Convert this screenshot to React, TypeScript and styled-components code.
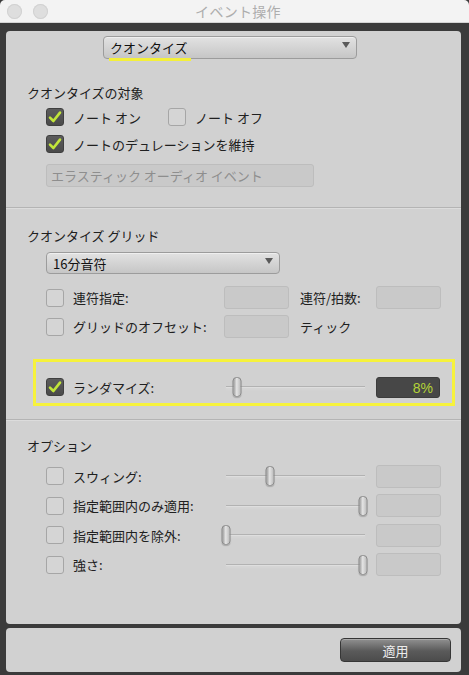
import React from 'react';
import styled, { createGlobalStyle } from 'styled-components';

const GlobalStyle = createGlobalStyle`
  html, body {
    margin: 0;
    padding: 0;
    background: #3b3b3b;
  }
  body {
    font-family: "Noto Sans CJK JP", "Noto Sans", sans-serif;
    font-size: 13px;
    color: #1f1f1f;
  }
`;

// window chrome
const Window = styled.div`
  width: 469px;
  height: 675px;
  display: flex;
  flex-direction: column;
  background: #3b3b3b;
  overflow: hidden;
`;

const TitleBar = styled.div`
  flex: none;
  height: 23px;
  box-sizing: border-box;
  display: grid;
  grid-template-columns: 1fr auto 1fr;
  align-items: center;
  background: #f3f3f3;
  border-bottom: 1px solid #d4d4d4;
  border-radius: 5px 5px 0 0;
  padding-left: 7px;
`;

const Lights = styled.div`
  display: flex;
  gap: 11px;
`;

const Light = styled.span`
  width: 15px;
  height: 15px;
  border-radius: 50%;
  background: #dedede;
  box-shadow: inset 0 0 0 1px #d2d2d2;
`;

const Title = styled.div`
  font-size: 14px;
  color: #adadad;
  letter-spacing: 0.3px;
  line-height: 22px;
`;

const Body = styled.div`
  flex: 1;
  display: flex;
  flex-direction: column;
  gap: 4px;
  padding: 8px 8px 3px 6px;
`;

const Panel = styled.div`
  flex: 1;
  display: flex;
  flex-direction: column;
  background: #d1d1d1;
  border-radius: 4px;
`;

const Footer = styled.div`
  flex: none;
  height: 44px;
  box-sizing: border-box;
  display: flex;
  justify-content: flex-end;
  padding: 10px 10px 0 0;
  background: #d1d1d1;
  border-radius: 4px;
`;

const Section = styled.div<{ $height?: number; $top: number }>`
  flex: ${(p) => (p.$height ? 'none' : '1')};
  height: ${(p) => (p.$height ? `${p.$height}px` : 'auto')};
  box-sizing: border-box;
  display: flex;
  flex-direction: column;
  align-items: flex-start;
  padding: ${(p) => p.$top}px 0 0 21px;
`;

const Divider = styled.div`
  flex: none;
  height: 1px;
  background: #b4b4b4;
  border-bottom: 1px solid #dcdcdc;
`;

const Heading = styled.div<{ $mt?: number }>`
  line-height: 18px;
  margin-top: ${(p) => p.$mt ?? 0}px;
  color: #202020;
`;

// popup menus
const Select = styled.div<{ $width: number; $height: number; $ml: number; $mt?: number }>`
  position: relative;
  box-sizing: border-box;
  width: ${(p) => p.$width}px;
  height: ${(p) => p.$height}px;
  margin-left: ${(p) => p.$ml}px;
  margin-top: ${(p) => p.$mt ?? 0}px;
  padding-left: 6px;
  display: flex;
  align-items: center;
  background: linear-gradient(#e2e2e2, #c6c6c6);
  border: 1px solid #9c9c9c;
  border-radius: 4px;
  box-shadow: inset 0 1px 0 #efefef;
  color: #111;
  font-size: 13px;

  &::after {
    content: '';
    position: absolute;
    right: 6px;
    top: 5px;
    border-left: 4.5px solid transparent;
    border-right: 4.5px solid transparent;
    border-top: 6px solid #5a5a5a;
  }
`;

const Marker = styled.span`
  position: absolute;
  left: 5px;
  bottom: -3px;
  width: 82px;
  height: 3px;
  background: #f4f03a;
`;

// rows
const Row = styled.div<{ $mt?: number; $height?: number }>`
  display: flex;
  align-items: center;
  height: ${(p) => p.$height ?? 24}px;
  margin-top: ${(p) => p.$mt ?? 0}px;
  margin-left: 19px;
`;

const Box = styled.span<{ $checked?: boolean }>`
  flex: none;
  width: 18px;
  height: 18px;
  box-sizing: border-box;
  margin-right: 9px;
  border-radius: 3px;
  display: flex;
  align-items: center;
  justify-content: center;
  background: ${(p) => (p.$checked ? 'linear-gradient(#5c5c5c, #4a4a4a)' : '#d5d5d5')};
  border: 1px solid ${(p) => (p.$checked ? '#3f3f3f' : '#a6a6a6')};
`;

const Label = styled.span<{ $width?: number }>`
  flex: none;
  width: ${(p) => (p.$width ? `${p.$width}px` : 'auto')};
  white-space: nowrap;
  color: #202020;
`;

const Field = styled.div<{ $width: number }>`
  flex: none;
  box-sizing: border-box;
  width: ${(p) => p.$width}px;
  height: 23px;
  padding-left: 4px;
  display: flex;
  align-items: center;
  background: #c9c9c9;
  border: 1px solid #bdbdbd;
  border-radius: 3px;
  color: #8e8e8e;
`;

const Gap = styled.span<{ $w: number }>`
  flex: none;
  width: ${(p) => p.$w}px;
`;

const Highlight = styled.div`
  box-sizing: border-box;
  width: 422px;
  height: 47px;
  margin: 21px 0 0 6px;
  padding: 14px 0 0 10px;
  border: 3px solid #f6f23c;
`;

const HighlightRow = styled.div`
  display: flex;
  align-items: center;
  height: 22px;
`;

const Track = styled.div`
  position: relative;
  flex: none;
  width: 139px;
  height: 22px;

  &::before {
    content: '';
    position: absolute;
    left: 0;
    right: 0;
    top: 10px;
    height: 1px;
    background: #b2b2b2;
    box-shadow: 0 1px 0 #dedede, 0 2px 3px rgba(255, 255, 255, 0.35);
  }
`;

const Thumb = styled.span`
  position: absolute;
  top: 1px;
  width: 9px;
  height: 20px;
  box-sizing: border-box;
  transform: translateX(-50%);
  border-radius: 4px;
  background: linear-gradient(90deg, #9a9a9a, #e4e4e4 45%, #bdbdbd);
  border: 1px solid #8a8a8a;
  box-shadow: 0 1px 1px rgba(0, 0, 0, 0.2);
`;

const Readout = styled.div`
  flex: none;
  box-sizing: border-box;
  width: 64px;
  height: 21px;
  margin-left: 11px;
  padding-right: 6px;
  text-align: right;
  line-height: 20px;
  font-size: 14px;
  font-family: "Liberation Sans", "Noto Sans", sans-serif;
  color: #b4d437;
  background: #474747;
  border: 1px solid #3c3c3c;
  border-radius: 3px;
`;

const ApplyButton = styled.button`
  width: 111px;
  height: 24px;
  padding: 0;
  border: 1px solid #363636;
  border-radius: 4px;
  background: linear-gradient(#909090, #5a5a5a 55%, #4c4c4c);
  color: #ececec;
  font-family: "Noto Sans CJK JP", sans-serif;
  font-size: 13px;
  box-shadow: inset 0 1px 0 rgba(255, 255, 255, 0.25);
`;

const Check: React.FC<{ checked?: boolean }> = ({ checked }) => (
  <Box $checked={checked}>
    {checked && (
      <svg width="16" height="16" viewBox="0 0 16 16">
        <path d="M3 8.6 L6.4 12 L13 3.6" fill="none" stroke="#c2e63a" strokeWidth="2.6" strokeLinecap="round" strokeLinejoin="round" />
      </svg>
    )}
  </Box>
);

const Slider: React.FC<{ value: number }> = ({ value }) => (
  <Track>
    <Thumb style={{ left: `${value}%` }} />
  </Track>
);

const options = [
  { label: 'スウィング:', value: 32 },
  { label: '指定範囲内のみ適用:', value: 98.5 },
  { label: '指定範囲内を除外:', value: 0 },
  { label: '強さ:', value: 98.5 },
];

export default function App() {
  return (
    <>
      <GlobalStyle />
      <Window>
        <TitleBar>
          <Lights>
            <Light />
            <Light />
          </Lights>
          <Title>イベント操作</Title>
          <span />
        </TitleBar>
        <Body>
          <Panel>
            <Section $height={176} $top={5}>
              <Select $width={254} $height={23} $ml={76}>
                クオンタイズ
                <Marker />
              </Select>
              <Heading $mt={25}>クオンタイズの対象</Heading>
              <Row $mt={3}>
                <Check checked />
                <Label $width={95}>ノート オン</Label>
                <Check />
                <Label>ノート オフ</Label>
              </Row>
              <Row $mt={3}>
                <Check checked />
                <Label>ノートのデュレーションを維持</Label>
              </Row>
              <Row $mt={8} $height={23}>
                <Field $width={268}>エラスティック オーディオ イベント</Field>
              </Row>
            </Section>
            <Divider />
            <Section $height={210} $top={18}>
              <Heading>クオンタイズ グリッド</Heading>
              <Select $width={234} $height={22} $ml={19} $mt={7}>
                16分音符
              </Select>
              <Row $mt={12} $height={23}>
                <Check />
                <Label $width={151}>連符指定:</Label>
                <Field $width={65} />
                <Gap $w={11} />
                <Label $width={76}>連符/拍数:</Label>
                <Field $width={65} />
              </Row>
              <Row $mt={6} $height={23}>
                <Check />
                <Label $width={151}>グリッドのオフセット:</Label>
                <Field $width={65} />
                <Gap $w={11} />
                <Label>ティック</Label>
              </Row>
              <Highlight>
                <HighlightRow>
                  <Check checked />
                  <Label $width={153}>ランダマイズ:</Label>
                  <Slider value={8} />
                  <Readout>8%</Readout>
                </HighlightRow>
              </Highlight>
            </Section>
            <Divider />
            <Section $top={16}>
              <Heading>オプション</Heading>
              {options.map((o, i) => (
                <Row key={o.label} $mt={i === 0 ? 9 : 5.5}>
                  <Check />
                  <Label $width={153}>{o.label}</Label>
                  <Slider value={o.value} />
                  <Gap $w={11} />
                  <Field $width={65} />
                </Row>
              ))}
            </Section>
          </Panel>
          <Footer>
            <ApplyButton>適用</ApplyButton>
          </Footer>
        </Body>
      </Window>
    </>
  );
}
